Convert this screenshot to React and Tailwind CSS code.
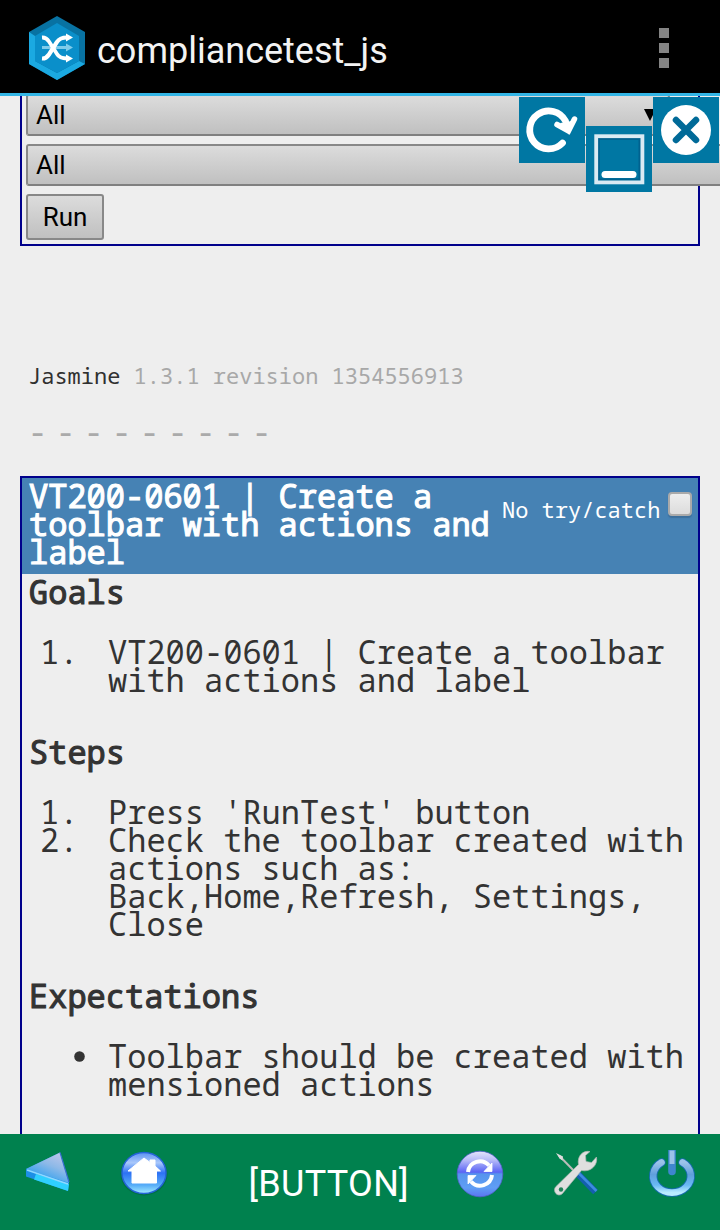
function AppLogo() {
  return (
    <svg className="mt-0.5 h-16 w-[58px] shrink-0" viewBox="0 0 58 64">
      <path d="M29 0 57 16V48L29 64 1 48V16Z" fill="#0872a2" />
      <path d="M1 16 7 20V45L29 57 51 45 57 48 29 64 1 48Z" fill="#1ba9e1" />
      <path d="M29 7 51 20V45L29 57 7 45V20Z" fill="#0a8fca" />
      <path d="M14 31.5H39" stroke="#7fcbea" strokeWidth="3" />
      <path d="M38 27.5 45 31.5 38 35.5Z" fill="#7fcbea" />
      <path d="M14 21.5C17 21.3 19 22.500 21 25.500L29 38C31 41.500 34 42.5 39 42.5" fill="none" stroke="#fff" strokeWidth="3.8" />
      <path d="M14 42.5C17 42.700 19 41.500 21 38.500L29 26C31 22.500 34 21.5 39 21.5" fill="none" stroke="#fff" strokeWidth="4.200" />
      <path d="M38 17.5 45 21.5 38 25.5ZM38 38.5 45 42.5 38 46.5Z" fill="#fff" />
    </svg>
  );
}

function TitleBar() {
  return (
    <header className="flex h-24 shrink-0 items-center justify-between border-b-[3px] border-[#33b5e5] bg-black pt-px pr-[51px] pl-[28px]">
      <div className="flex items-center gap-[11px]">
        <AppLogo />
        <h1 className="mt-2 text-[36px] leading-[42px] whitespace-nowrap text-[#f3f3f3]">compliancetest_js</h1>
      </div>
      <div className="mt-0.5 flex flex-col gap-[5px]">
        <i className="size-2.5 bg-[#848484]" />
        <i className="size-2.5 bg-[#848484]" />
        <i className="size-2.5 bg-[#848484]" />
      </div>
    </header>
  );
}

function WindowControls() {
  return (
    <div className="absolute top-px left-[519px] flex gap-px">
      <svg className="size-[66px] bg-[#0077a3]" viewBox="0 0 66 66">
        <path d="M43.500 46A19 19 0 1 1 46.500 24" fill="none" stroke="#fff" strokeWidth="6.8" strokeLinecap="round" />
        <path d="M38 27.5 49.5 34 55.5 22" fill="none" stroke="#fff" strokeWidth="5.5" strokeLinecap="round" />
        <path d="M41 26 49.8 37.5 56 23 48 25Z" fill="#fff" />
      </svg>
      <svg className="mt-[29px] size-[66px] bg-[#0077a3]" viewBox="0 0 66 66">
        <rect x="13" y="13" width="40.500" height="40.500" fill="none" stroke="#00628f" strokeWidth="2" />
        <rect x="10.2" y="10.2" width="46.2" height="46.2" fill="none" stroke="#d9eaf3" strokeWidth="3.800" />
        <path d="M19 48.500H47" stroke="#fff" strokeWidth="7" strokeLinecap="round" />
      </svg>
      <svg className="size-[66px] bg-[#0077a3]" viewBox="0 0 66 66">
        <circle cx="33" cy="33" r="25" fill="#fff" />
        <path d="M23 23 43 43M43 23 23 43" stroke="#006a98" strokeWidth="6.500" strokeLinecap="round" />
      </svg>
    </div>
  );
}

function SelectBox({ wide }) {
  return (
    <div
      className={
        "relative flex h-[42px] items-center justify-between rounded-[3px] border-2 border-[#888] border-b-[#808080] bg-linear-to-b from-[#dcdcdc] to-[#c0c0c0] pl-2 text-[26px] leading-none text-black " +
        (wide ? "w-[720px]" : "w-[644px]")
      }
    >
      <span>All</span>
      {!wide && (
        <svg className="mr-3 h-3 w-3" viewBox="0 0 12 12">
          <path d="M0 0H12L6 12Z" fill="#000" />
        </svg>
      )}
    </div>
  );
}

function Heading({ children }) {
  return <h2 className="mb-8 pl-[7px] font-normal [-webkit-text-stroke:1.1px_#333]">{children}</h2>;
}

function Item({ mark, children }) {
  return (
    <li className="flex">
      <span className="w-[86px] shrink-0 pl-[18px]">{mark}</span>
      <span className="whitespace-nowrap">{children}</span>
    </li>
  );
}

function TestCard() {
  return (
    <section className="mt-[30px] ml-5 h-[700px] w-[680px] border-2 border-[#00008b] text-[32px] leading-7 text-[#333]">
      <div className="flex h-24 bg-[#4682b4] pt-1 pl-[7px] text-white">
        <h2 className="w-[473px] shrink-0 font-normal whitespace-nowrap [-webkit-text-stroke:1.1px_#fff]">
          VT200-0601 | Create a<br />
          toolbar with actions and
          <br />
          label
        </h2>
        <label className="flex items-start text-[22px] leading-7 whitespace-nowrap">
          <span className="mt-[13px] w-[166px]">No try/catch</span>
          <span className="mt-[10px] size-6 rounded-[4px] border-2 border-[#aaa] bg-linear-to-b from-[#eee] to-[#dcdcdc] shadow-[0_2px_1px_#3c6f9c]" />
        </label>
      </div>
      <div className="pt-1">
        <Heading>Goals</Heading>
        <ol className="mb-11">
          <Item mark="1.">
            VT200-0601 | Create a toolbar
            <br />
            with actions and label
          </Item>
        </ol>
        <Heading>Steps</Heading>
        <ol className="mb-11">
          <Item mark="1.">Press 'RunTest' button</Item>
          <Item mark="2.">
            Check the toolbar created with
            <br />
            actions such as:
            <br />
            Back,Home,Refresh, Settings,
            <br />
            Close
          </Item>
        </ol>
        <Heading>Expectations</Heading>
        <ul>
          <Item
            mark={
              <svg className="mt-[9px] ml-[34px] size-[11px]" viewBox="0 0 11 11">
                <circle cx="5.5" cy="5.5" r="5.3" fill="#333" />
              </svg>
            }
          >
            Toolbar should be created with
            <br />
            mensioned actions
          </Item>
        </ul>
      </div>
    </section>
  );
}

function BackIcon() {
  return (
    <svg className="size-12 overflow-visible" viewBox="0 0 48 48">
      <defs>
        <linearGradient id="back" x1="0.9" y1="0" x2="0.3" y2="1">
          <stop offset="0" stopColor="#c5c8ea" />
          <stop offset="0.45" stopColor="#8db9e8" />
          <stop offset="1" stopColor="#1b9af0" />
        </linearGradient>
      </defs>
      <path d="M36 6.500 45 36 44 45 2 30.500V23Z" fill="#1c8fe6" />
      <path d="M36 6.500 45 37 2 23Z" fill="url(#back)" />
      <path d="M12 28 45 38 44 45 10 33.500Z" fill="#2fd0ff" />
      <path d="M3 24 44 38" stroke="#8ed8ff" strokeWidth="1.8" />
      <path d="M36 6.500 45 36" stroke="#3a6fd0" strokeWidth="1.2" />
    </svg>
  );
}

function HomeIcon() {
  return (
    <svg className="size-12 overflow-visible" viewBox="0 0 48 48">
      <defs>
        <linearGradient id="home" x1="0" y1="0" x2="0" y2="1">
          <stop offset="0" stopColor="#5c92f2" />
          <stop offset="0.25" stopColor="#a9c8fb" />
          <stop offset="0.5" stopColor="#2c71f5" />
          <stop offset="0.8" stopColor="#58aef8" />
          <stop offset="1" stopColor="#a5ecff" />
        </linearGradient>
      </defs>
      <ellipse cx="24" cy="28" rx="23.5" ry="21.5" fill="#02653f" opacity="0.6" />
      <ellipse cx="24" cy="27" rx="22" ry="20.5" fill="url(#home)" stroke="#2463d8" strokeWidth="1.5" />
      <path d="M24 12 30 16.500V14H35V20L40.500 25H36.500V37H12V25H8Z" fill="#fff" stroke="#fff" strokeWidth="1" strokeLinejoin="round" />
    </svg>
  );
}

function RefreshIcon() {
  return (
    <svg className="size-12 overflow-visible" viewBox="0 0 48 48">
      <defs>
        <linearGradient id="refresh" x1="0" y1="0" x2="0" y2="1">
          <stop offset="0" stopColor="#e5e6fb" />
          <stop offset="0.2" stopColor="#b5b9f8" />
          <stop offset="0.46" stopColor="#5a63f5" />
          <stop offset="0.5" stopColor="#5694ed" />
          <stop offset="0.8" stopColor="#5f9ef5" />
          <stop offset="1" stopColor="#5b74f2" />
        </linearGradient>
      </defs>
      <circle cx="24" cy="28" r="22.8" fill="url(#refresh)" stroke="#5560cc" strokeWidth="0.8" />
      <path d="M12 26A12 12 0 0 1 33 19.500M36 29A12 12 0 0 1 15 35.500" fill="none" stroke="#fff" strokeWidth="4" />
      <path d="M36 17V25.500H28ZM12 38V29.500H20Z" fill="#fff" stroke="#fff" strokeWidth="0.8" />
    </svg>
  );
}

function SettingsIcon() {
  return (
    <svg className="size-12 overflow-visible" viewBox="0 0 48 48">
      <path d="M25 27 43.500 46" stroke="#145fae" strokeWidth="6.500" />
      <path d="M27 27.500 44.500 45" stroke="#3d8ce0" strokeWidth="2.500" />
      <path d="M7 9.5 24 27" stroke="#b9bdb9" strokeWidth="2" />
      <path d="M4 7 11 10.5 10.5 14.500 7.500 12.5Z" fill="#ddd" />
      <path
        d="M38 5.500C30 4 25 11 26.500 18.500L3.500 41C0.500 45 5 51.500 10 48L29.500 24.500C39 26.500 46 19 44.500 11L39.500 16.500 34 15.500 33.500 9.500Z"
        fill="#dfdfdf"
        stroke="#aeb5b0"
        strokeWidth="0.7"
      />
      <circle cx="9" cy="43.5" r="2.2" fill="#218158" />
    </svg>
  );
}

function PowerIcon() {
  return (
    <svg className="size-12 overflow-visible" viewBox="0 0 48 48">
      <defs>
        <linearGradient id="power" x1="0" y1="0" x2="0" y2="1">
          <stop offset="0" stopColor="#9cc3ea" />
          <stop offset="0.4" stopColor="#5f9fdc" />
          <stop offset="0.75" stopColor="#69b9f5" />
          <stop offset="1" stopColor="#b9ecff" />
        </linearGradient>
      </defs>
      <path d="M13.500 16.4A18.800 16.500 0 1 0 34.500 16.4" fill="none" stroke="#176cb0" strokeWidth="8.400" strokeLinecap="round" />
      <path d="M13.500 16.4A18.800 16.500 0 1 0 34.500 16.4" fill="none" stroke="url(#power)" strokeWidth="6.6" strokeLinecap="round" />
      <path d="M20.200 4H27.800V25.500A3.800 3.800 0 0 1 20.200 25.500Z" fill="#3f86cf" />
      <path d="M21.5 4.500H26.5V18H21.5Z" fill="#9bc2e8" />
    </svg>
  );
}

function Toolbar() {
  return (
    <footer className="flex h-24 shrink-0 items-start bg-[#00814e] pt-3">
      <div className="flex w-[168px] justify-between pl-6">
        <BackIcon />
        <HomeIcon />
      </div>
      <span className="w-[288px] pt-[17px] pl-[80.500px] text-[36px] leading-[42px] tracking-[0.3px] whitespace-nowrap text-white">[BUTTON]</span>
      <div className="flex gap-12">
        <RefreshIcon />
        <SettingsIcon />
        <PowerIcon />
      </div>
    </footer>
  );
}

export default function App() {
  return (
    <div className="flex h-[1230px] w-[720px] flex-col overflow-hidden bg-[#eee] font-[Roboto,sans-serif]">
      <TitleBar />
      <main className="relative min-h-0 flex-1 overflow-hidden">
        <div className="-mt-1 ml-5 flex h-[154px] w-[680px] flex-col gap-2 border-2 border-[#00008b] pl-1">
          <SelectBox />
          <SelectBox wide />
          <button className="h-[46px] w-[78px] rounded-[3px] border-2 border-[#888] bg-linear-to-b from-[#dcdcdc] to-[#c0c0c0] text-[26px] leading-none text-black">Run</button>
        </div>
        <div className="font-['Noto_Sans_Mono','DejaVu_Sans_Mono',monospace]">
          <p className="mt-[115px] ml-[28px] text-[22px] leading-7 whitespace-pre text-[#303030]">
            Jasmine <span className="text-[#a8a8a8]">1.3.1 revision 1354556913</span>
          </p>
          <p className="mt-[29px] ml-[28px] text-[32px] leading-7 tracking-[-5.2px] whitespace-pre text-[#aaa]">- - - - - - - - -</p>
          <TestCard />
        </div>
        <WindowControls />
      </main>
      <Toolbar />
    </div>
  );
}
